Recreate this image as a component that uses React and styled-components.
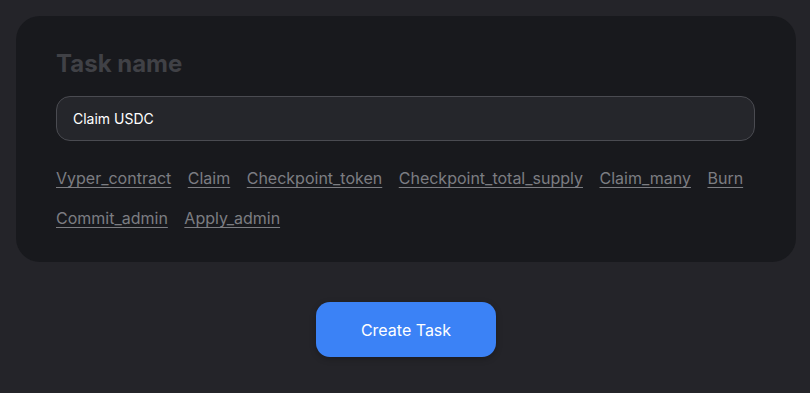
import React, { useState } from "react";
import styled, { createGlobalStyle } from "styled-components";

const GlobalStyle = createGlobalStyle`
    html, body {
        margin: 0;
        padding: 0;
        background: #242429;
        font-family: Inter, "Noto Sans", sans-serif;
    }
    * {
        box-sizing: border-box;
    }
`;

const METHODS = [
    "Vyper_contract",
    "Claim",
    "Checkpoint_token",
    "Checkpoint_total_supply",
    "Claim_many",
    "Burn",
    "Commit_admin",
    "Apply_admin",
];

const App = () => {
    const [name, setName] = useState("Claim USDC");

    return (
        <Page>
            <GlobalStyle />
            <Card>
                <Title>Task name</Title>
                <NameInput
                    value={name}
                    onChange={(e) => setName(e.target.value)}
                    autoFocus
                />
                <Methods>
                    {METHODS.map((item) => (
                        <MethodLink key={item} href="#" onClick={(e) => {
                            e.preventDefault();
                            setName(item);
                        }}>
                            {item}
                        </MethodLink>
                    ))}
                </Methods>
            </Card>
            <Actions>
                <CreateButton>Create Task</CreateButton>
            </Actions>
        </Page>
    );
};

const Page = styled.div`
    min-height: 393px;
    padding: 16px 14px 16px 16px;
`;

const Card = styled.div`
    background: #18191d;
    border-radius: 24px;
    padding: 33px 41px 32px 40px;
`;

const Title = styled.h2`
    margin: 0 0 17px;
    font-size: 24px;
    line-height: 30px;
    font-weight: 700;
    color: #404146;
`;

const NameInput = styled.input`
    display: block;
    width: 100%;
    height: 45px;
    padding: 0 16px;
    background: #25262b;
    border: 1px solid #4a4b51;
    border-radius: 14px;
    color: #ffffff;
    font-family: inherit;
    font-size: 14px;
    outline: none;
    caret-color: #ffffff;
`;

const Methods = styled.div`
    display: flex;
    flex-wrap: wrap;
    column-gap: 16.5px;
    row-gap: 16px;
    margin-top: 25px;
`;

const MethodLink = styled.a`
    font-size: 16px;
    line-height: 24px;
    color: #7c7d82;
    text-decoration: underline;
    text-underline-offset: 3px;
    text-decoration-thickness: 1px;
`;

const Actions = styled.div`
    display: flex;
    justify-content: center;
    margin-top: 40px;
`;

const CreateButton = styled.button`
    width: 180px;
    height: 55px;
    border: none;
    border-radius: 14px;
    background: #3b82f6;
    color: #ffffff;
    font-family: inherit;
    font-size: 16px;
    cursor: pointer;
    box-shadow: 0 2px 6px rgba(0, 0, 0, 0.25);
`;

export default App;
